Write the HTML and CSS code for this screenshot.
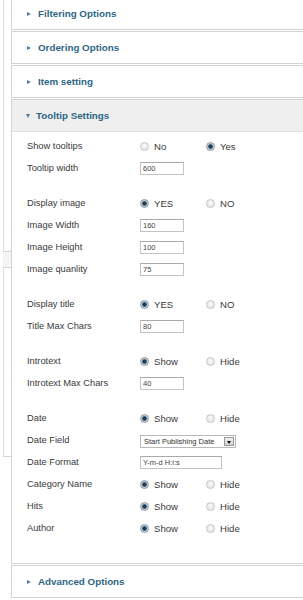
FILE: index.html
```
<!DOCTYPE html>
<html>
<head>
<meta charset="utf-8">
<link rel="stylesheet" href="styles.css">
</head>
<body>
<div class="page">
  <aside class="side">
    <div class="side-box top"></div>
    <div class="side-gap"></div>
    <div class="side-box mid"></div>
  </aside>
  <main class="panels">
    <section class="panel first">
      <div class="hd"><span class="arrow"></span>Filtering Options</div>
    </section>
    <section class="panel">
      <div class="hd"><span class="arrow"></span>Ordering Options</div>
    </section>
    <section class="panel">
      <div class="hd"><span class="arrow"></span>Item setting</div>
    </section>
    <section class="panel open">
      <div class="hd"><span class="arrow down"></span>Tooltip Settings</div>
      <div class="body">
        <div class="row"><span class="lbl">Show tooltips</span><span class="opt"><span class="radio"></span>No</span><span class="opt"><span class="radio on"></span>Yes</span></div>
        <div class="row"><span class="lbl">Tooltip width</span><span class="input">600</span></div>

        <div class="row gap"><span class="lbl">Display image</span><span class="opt"><span class="radio on"></span>YES</span><span class="opt"><span class="radio"></span>NO</span></div>
        <div class="row"><span class="lbl">Image Width</span><span class="input">160</span></div>
        <div class="row"><span class="lbl">Image Height</span><span class="input">100</span></div>
        <div class="row"><span class="lbl">Image quanlity</span><span class="input">75</span></div>

        <div class="row gap"><span class="lbl">Display title</span><span class="opt"><span class="radio on"></span>YES</span><span class="opt"><span class="radio"></span>NO</span></div>
        <div class="row"><span class="lbl">Title Max Chars</span><span class="input">80</span></div>

        <div class="row gap"><span class="lbl">Introtext</span><span class="opt"><span class="radio on"></span>Show</span><span class="opt"><span class="radio"></span>Hide</span></div>
        <div class="row"><span class="lbl">Introtext Max Chars</span><span class="input">40</span></div>

        <div class="row gap"><span class="lbl">Date</span><span class="opt"><span class="radio on"></span>Show</span><span class="opt"><span class="radio"></span>Hide</span></div>
        <div class="row"><span class="lbl">Date Field</span><span class="select"><span class="sel-text">Start Publishing Date</span><span class="sel-btn"></span></span></div>
        <div class="row"><span class="lbl">Date Format</span><span class="input wide">Y-m-d H:i:s</span></div>
        <div class="row"><span class="lbl">Category Name</span><span class="opt"><span class="radio on"></span>Show</span><span class="opt"><span class="radio"></span>Hide</span></div>
        <div class="row"><span class="lbl">Hits</span><span class="opt"><span class="radio on"></span>Show</span><span class="opt"><span class="radio"></span>Hide</span></div>
        <div class="row"><span class="lbl">Author</span><span class="opt"><span class="radio on"></span>Show</span><span class="opt"><span class="radio"></span>Hide</span></div>
      </div>
    </section>
    <section class="panel">
      <div class="hd"><span class="arrow"></span>Advanced Options</div>
    </section>
  </main>
</div>
</body>
</html>
```

FILE: styles.css
```
html, body {
  margin: 0;
  padding: 0;
  background: #fff;
}

.page {
  display: flex;
  width: 303px;
  height: 600px;
  overflow: hidden;
  font-family: "Liberation Sans", Arial, sans-serif;
}

.side {
  flex: none;
  width: 11px;
  display: flex;
  flex-direction: column;
  padding-left: 3px;
  box-sizing: border-box;
}

.side-box.top {
  height: 251px;
  border-left: 1px solid #dcdcdc;
  border-bottom: 1px solid #d6d6d6;
}

.side-gap {
  height: 15px;
  background: #f5f5f5;
}

.side-box.mid {
  height: 188px;
  border-left: 1px solid #dcdcdc;
  border-top: 1px solid #d6d6d6;
  border-bottom: 1px solid #d6d6d6;
}

.panels {
  flex: none;
  width: 320px;
  display: flex;
  flex-direction: column;
}

.panel {
  border: 1px solid #d3d3d3;
  background: #fff;
  margin-bottom: 1px;
}

.panel.first {
  margin-top: -3px;
}

.hd {
  height: 31px;
  display: flex;
  align-items: center;
  padding-left: 14px;
  font-weight: bold;
  font-size: 9.8px;
  color: #2e6585;
}

.arrow {
  width: 0;
  height: 0;
  border-top: 2.5px solid transparent;
  border-bottom: 2.5px solid transparent;
  border-left: 4px solid #4a7d9a;
  margin-right: 7px;
  margin-left: 1px;
}

.arrow.down {
  border-left: 2.5px solid transparent;
  border-right: 2.5px solid transparent;
  border-top: 4px solid #4a7d9a;
  border-bottom: 0;
  margin-left: 0;
  margin-right: 6px;
}

.open .hd {
  background: #efefef;
  border-bottom: 1px solid #e2e2e2;
}

.body {
  padding: 3px 0 24px 15px;
}

.row {
  height: 22px;
  display: flex;
  align-items: center;
  font-size: 9.3px;
  color: #3a3a3a;
}

.row.gap {
  margin-top: 13px;
}

.lbl {
  width: 113px;
  flex: none;
}

.opt {
  width: 66px;
  flex: none;
  display: flex;
  align-items: center;
  font-size: 9.6px;
}

.radio {
  width: 7px;
  height: 7px;
  border-radius: 50%;
  border: 1px solid #c6c6c6;
  background: radial-gradient(circle at 50% 40%, #fbfbfb, #dedede);
  margin-right: 5px;
  flex: none;
}

.radio.on {
  border-color: #8b9aa5;
  background: radial-gradient(circle, #1e3c52 0, #1e3c52 1.8px, #b9c6cf 2.6px, #e6eaee 100%);
}

.input {
  width: 40px;
  height: 11px;
  border: 1px solid #c4c4c4;
  border-top-color: #a9a9a9;
  font-size: 7.5px;
  line-height: 11px;
  padding-left: 2px;
  color: #444;
  flex: none;
}

.input.wide {
  width: 78px;
}

.select {
  width: 94px;
  height: 11px;
  border: 1px solid #b9b9b9;
  display: flex;
  align-items: center;
  margin-top: 2px;
  flex: none;
}

.sel-text {
  flex: 1;
  font-size: 7.5px;
  padding-left: 3px;
  color: #333;
  white-space: nowrap;
}

.sel-btn {
  width: 10px;
  height: 9px;
  margin-right: 1px;
  background: linear-gradient(#f2f2f2, #cfcfcf);
  border: 1px solid #9a9a9a;
  box-sizing: border-box;
  position: relative;
}

.sel-btn::after {
  content: "";
  position: absolute;
  left: 2px;
  top: 3px;
  border-left: 2.5px solid transparent;
  border-right: 2.5px solid transparent;
  border-top: 3px solid #111;
}
```
